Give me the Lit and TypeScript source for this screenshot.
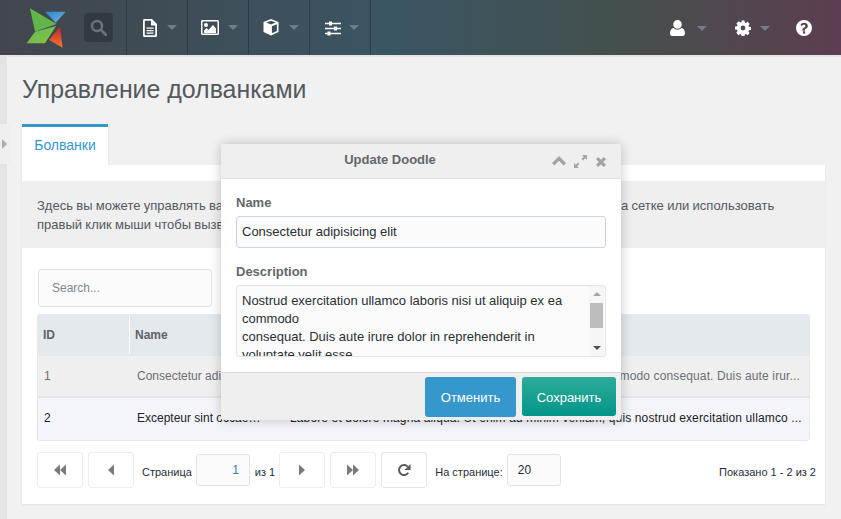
import { LitElement, html, css, svg } from 'lit'
import { customElement } from 'lit/decorators.js'

const icons = {
  file: svg`<path fill-rule="evenodd" d="M1 1.500C1 .7 1.700 0 2.500 0H10l5 5v11.500c0 .8-.7 1.500-1.500 1.500h-11C1.700 18 1 17.300 1 16.500zM2.800 1.800v14.400h10.400V6.500H9V1.800zM4.500 8.500h7v1.300h-7zM4.500 11h7v1.300h-7zM4.500 13.500h7v1.300h-7z"/>`,
  image: svg`<path fill-rule="evenodd" d="M0 1.500C0 .7.700 0 1.500 0h15c.8 0 1.500.7 1.500 1.500v12c0 .8-.7 1.500-1.500 1.500h-15C.7 15 0 14.300 0 13.500zM1.500 1.500v12h15v-12zM3 13l0-2.500 2.500-2.500 2 2 4.500-5 3 3.500V13zM5 3a2 2 0 1 1 0 4 2 2 0 0 1 0-4z"/>`,
  cube: svg`<path fill-rule="evenodd" d="M8 0l7.500 3v10L8 16.500.5 13V3zM3.300 3.600L8 5.400l4.700-1.800L8 1.800zM8.900 14.300l5-2.300V5.200l-5 2z"/>`,
  sliders: svg`<path d="M0 2.700h4V1.500h3v1.200h9v1.600H7v1.200H4V4.300H0zM0 7.700h9V6.500h3v1.200h4v1.600h-4v1.200H9V9.300H0zM0 12.700h2.500v-1.200h3v1.200H16v1.600H5.500v1.200h-3v-1.200H0z"/>`,
  user: svg`<path d="M7.500 0a4.200 4.200 0 0 1 4.200 4.400A4.200 4.200 0 0 1 7.500 8.800a4.200 4.200 0 0 1-4.200-4.400A4.200 4.200 0 0 1 7.500 0zM3.700 8c1 1 2.300 1.700 3.800 1.700S10.300 9 11.300 8c2.500.3 3.700 2.500 3.700 5.500 0 1.500-1 2.500-2.400 2.500H2.400C1 16 0 15 0 13.500 0 10.500 1.200 8.300 3.700 8z"/>`,
  cog: svg`<path fill-rule="evenodd" d="M6.300 0h3.400l.4 2.400 1.300.6 2-1.400 2.400 2.400-1.400 2 .6 1.300 2.400.4v3.400l-2.400.4-.6 1.300 1.400 2-2.400 2.400-2-1.400-1.300.6-.4 2.400H6.300l-.4-2.400-1.300-.6-2 1.400L.2 14.200l1.400-2-.6-1.300L-1.400 10.500V7.100l2.400-.4.600-1.300-1.400-2L3 1 5 2.400l1.300-.6zM8 6a2.800 2.800 0 1 0 0 5.600A2.800 2.800 0 0 0 8 6z"/>`,
  help: svg`<path fill-rule="evenodd" d="M8 0a8 8 0 1 1 0 16A8 8 0 0 1 8 0zM6.900 11.200v2.200h2.300v-2.200zM8.200 2.700c-1.800 0-3 .8-3.800 2l1.500 1.200c.5-.6 1-1.100 2-1.100.9 0 1.500.5 1.500 1.200 0 .8-.6 1.100-1.300 1.500-.9.500-1.700 1.100-1.700 2.300v.9h2.300v-.6c0-.6.400-.9 1.100-1.300 1-.6 2-1.300 2-2.900 0-2-1.800-3.200-3.600-3.200z"/>`,
}

const rows = [
  { id: '1', name: 'Consectetur adipisicing elit', description: 'Nostrud exercitation ullamco laboris nisi ut aliquip ex ea commodo consequat. Duis aute irur...' },
  { id: '2', name: 'Excepteur sint occaecat cupidatat', description: 'Labore et dolore magna aliqua. Ut enim ad minim veniam, quis nostrud exercitation ullamco ...' },
]

@customElement('app-root')
export class AppRoot extends LitElement {
  static styles = css`
    :host {
      display: block;
      position: relative;
      width: 841px;
      height: 519px;
      overflow: hidden;
      background: #f1f1f1;
      font-family: 'Liberation Sans', Arial, sans-serif;
      font-size: 13px;
      color: #53595f;
    }

    svg {
      display: block;
    }

    .header {
      display: flex;
      align-items: stretch;
      height: 55px;
      border-bottom: 2px solid #e4e4e4;
      background: linear-gradient(90deg, #42464c 0%, #3a5563 47%, #44504f 72%, #5c3e50 100%);
    }

    .logo {
      width: 84px;
      flex: none;
      padding: 8px 0 0 26px;
      box-sizing: border-box;
    }

    .search-cell {
      width: 42px;
      flex: none;
      padding-top: 13px;
      box-sizing: border-box;
    }

    .search-btn {
      width: 29px;
      height: 29px;
      border-radius: 4px;
      background: #2f3a42;
      display: flex;
      align-items: center;
      justify-content: center;
    }

    .menu {
      width: 61px;
      flex: none;
      display: flex;
      align-items: center;
      justify-content: space-between;
      padding: 0 10px 0 15px;
      box-sizing: border-box;
      border-left: 1px solid #2c3d49;
    }

    .menu.image {
      padding-left: 13px;
    }

    .menu.cube {
      padding-left: 14px;
    }

    .menu.last {
      width: 62px;
      border-right: 1px solid #2c3d49;
      padding-right: 11px;
    }

    .menu svg {
      fill: #fff;
    }

    .caret {
      width: 0;
      height: 0;
      border-left: 5px solid transparent;
      border-right: 5px solid transparent;
      border-top: 5px solid #6d7f8a;
    }

    .spacer {
      flex: 1;
    }

    .top-right {
      display: flex;
      align-items: center;
      flex: none;
      padding-top: 1px;
    }

    .top-right svg {
      fill: #fff;
    }

    .top-right.user {
      width: 65px;
      gap: 12px;
    }

    .top-right.cog {
      width: 61px;
      gap: 9px;
    }

    .top-right.help {
      width: 45px;
    }

    .page {
      position: relative;
      height: 462px;
      box-sizing: border-box;
      padding: 0 16px 0 22px;
      background: linear-gradient(90deg, #e4e4e4 7px, #f1f1f1 7px);
    }

    .collapser {
      position: absolute;
      left: 0;
      top: 67px;
      width: 11px;
      height: 40px;
      border-radius: 0 3px 3px 0;
      background: #efefef;
      display: flex;
      align-items: center;
      padding-left: 2px;
      box-sizing: border-box;
    }

    .collapser i {
      border-left: 5px solid #a6adb3;
      border-top: 5px solid transparent;
      border-bottom: 5px solid transparent;
    }

    h1 {
      margin: 0;
      padding-top: 17px;
      height: 67px;
      box-sizing: border-box;
      font-size: 24.9px;
      line-height: 30px;
      font-weight: 400;
      color: #53595f;
    }

    .tab {
      width: 86px;
      height: 41px;
      box-sizing: border-box;
      border-top: 3px solid #3697cd;
      background: #fff;
      color: #3697cd;
      font-size: 14px;
      line-height: 37px;
      text-align: center;
      box-shadow: 0 1px 2px rgba(0, 0, 0, 0.08);
    }

    .panel {
      height: 339px;
      background: #fff;
      box-shadow: 0 1px 2px rgba(0, 0, 0, 0.08);
      padding-top: 16px;
      box-sizing: border-box;
    }

    .intro {
      height: 67px;
      padding: 15px 16px 0 15px;
      box-sizing: border-box;
      background: #efefef;
      line-height: 19px;
      word-spacing: -0.27px;
      white-space: nowrap;
      overflow: hidden;
    }

    .grid-wrap {
      padding: 21px 15px 0 15px;
    }

    .search {
      width: 174px;
      height: 38px;
      margin-left: 1px;
      box-sizing: border-box;
      border: 1px solid #e4e4e4;
      border-radius: 3px;
      background: #fbfbfb;
      padding-left: 13px;
      line-height: 36px;
      font-size: 12px;
      color: #80868c;
    }

    .table {
      margin-top: 7px;
      width: 773px;
      border: 1px solid #e4e9ee;
      border-radius: 3px;
      box-sizing: border-box;
    }

    .thead,
    .row {
      display: grid;
      grid-template-columns: 91px 154px minmax(0, 1fr);
      align-items: center;
      box-sizing: border-box;
    }

    .thead {
      height: 40px;
      background: #e4e9ee;
      font-size: 12px;
      font-weight: 700;
      color: #5f6367;
    }

    .thead div {
      height: 38px;
      line-height: 38px;
      padding-left: 5px;
    }

    .thead div + div {
      border-left: 1px solid #fff;
    }

    .row {
      height: 41px;
      font-size: 12px;
      color: #6a6f74;
      background: #efefef;
      border-top: 1px solid #e8e8e8;
    }

    .row.alt {
      height: 44px;
      padding-bottom: 2px;
      background: #f4f5fa;
      color: #1c2128;
      border-top: 2px solid #e4e4e4;
    }

    .row div {
      padding: 0 8px;
      white-space: nowrap;
      overflow: hidden;
      text-overflow: ellipsis;
    }

    .row div:first-child {
      padding-left: 6px;
    }

    .row div:nth-child(2) {
      padding-right: 20px;
    }

    .row div:last-child {
      padding: 0 0 0 7px;
      letter-spacing: 0.13px;
    }

    .pager {
      display: flex;
      align-items: center;
      height: 36px;
      margin-top: 11px;
      width: 779px;
      font-size: 11px;
      color: #1f2d3d;
    }

    .pbtn {
      width: 46px;
      height: 36px;
      box-sizing: border-box;
      border: 1px solid #eee;
      border-radius: 3px;
      margin-right: 5px;
      display: flex;
      align-items: center;
      justify-content: center;
      background: #fff;
    }

    .pbtn svg {
      fill: #7a7a7a;
    }

    .pbtn.next {
      margin-left: 4px;
    }

    .pbtn.refresh {
      border-color: #e4e4e4;
      margin-right: 8px;
    }

    .pinput {
      height: 32px;
      box-sizing: border-box;
      border: 1px solid #e4e4e4;
      border-radius: 3px;
      background: #fbfbfb;
      font-size: 12px;
      line-height: 30px;
    }

    .pinput.num {
      width: 54px;
      margin: 0 5px 0 4px;
      padding-right: 10px;
      text-align: right;
      color: #3b79b0;
    }

    .pinput.size {
      width: 54px;
      margin: 0 0 0 4px;
      padding-left: 10px;
      color: #1f2d3d;
    }

    .label {
      margin-top: 3px;
    }

    .label.first {
      margin-left: 3px;
    }

    .shown {
      margin-left: auto;
      margin-top: 3px;
    }

    .modal {
      position: absolute;
      left: 221px;
      top: 144px;
      width: 400px;
      height: 276px;
      border-radius: 3px;
      background: #fff;
      box-shadow: 0 0 12px rgba(0, 0, 0, 0.22);
      display: flex;
      flex-direction: column;
    }

    .modal-head {
      position: relative;
      height: 35px;
      flex: none;
      box-sizing: border-box;
      border-bottom: 1px solid #dfe3e6;
      border-radius: 3px 3px 0 0;
      background: #efefef;
      text-align: center;
      font-size: 13px;
      font-weight: 700;
      line-height: 31px;
      color: #63676b;
      padding-right: 62px;
    }

    .tools {
      position: absolute;
      right: 15px;
      top: 11px;
      display: flex;
      gap: 8px;
    }

    .tools svg {
      fill: #a3a3a3;
    }

    .tools .up {
      margin-top: 1px;
    }

    .tools .close {
      margin: 2px 0 0 1px;
    }

    .modal-body {
      flex: 1;
      padding: 16px 15px 0;
      box-sizing: border-box;
    }

    label {
      display: block;
      font-size: 13px;
      font-weight: 700;
      line-height: 15px;
      color: #63676b;
    }

    .field {
      margin-top: 6px;
      height: 32px;
      box-sizing: border-box;
      border: 1px solid #c9d5e0;
      border-radius: 3px;
      background: #fbfbfb;
      padding-left: 5px;
      line-height: 29px;
      font-size: 13px;
      color: #2a2f34;
    }

    .second {
      margin-top: 16px;
    }

    .area {
      position: relative;
      margin-top: 6px;
      height: 72px;
      box-sizing: border-box;
      border: 1px solid #e4e4e4;
      border-radius: 3px;
      background: #fbfbfb;
      padding: 6px 22px 0 5px;
      line-height: 18px;
      font-size: 13px;
      color: #2a2f34;
      overflow: hidden;
    }

    .scroll {
      position: absolute;
      right: 1px;
      top: 0;
      bottom: 0;
      width: 15px;
      background: #f6f6f6;
    }

    .scroll b {
      position: absolute;
      left: 1px;
      top: 17px;
      width: 13px;
      height: 25px;
      background: #bdbdbd;
    }

    .scroll i {
      position: absolute;
      left: 4px;
      width: 0;
      height: 0;
      border-left: 4px solid transparent;
      border-right: 4px solid transparent;
    }

    .scroll .up {
      top: 6px;
      border-bottom: 4px solid #a3a3a3;
    }

    .scroll .down {
      bottom: 6px;
      border-top: 4px solid #505050;
    }

    .modal-foot {
      height: 48px;
      flex: none;
      box-sizing: border-box;
      border-top: 1px solid #dcdcdc;
      border-radius: 0 0 3px 3px;
      background: #efefef;
      display: flex;
      justify-content: flex-end;
      align-items: center;
      gap: 6px;
      padding-right: 5px;
    }

    .btn {
      border-radius: 3px;
      color: #fff;
      text-align: center;
      font-size: 13px;
    }

    .btn.cancel {
      width: 91px;
      height: 40px;
      line-height: 42px;
      background: #3697cd;
    }

    .btn.save {
      width: 94px;
      height: 39px;
      line-height: 41px;
      background: linear-gradient(180deg, #2dab99 0%, #04958a 100%);
    }
  `

  private pagerIcon(d: string) {
    return html`<svg width="14" height="14" viewBox="0 0 14 14"><path d=${d}></path></svg>`
  }

  render() {
    return html`
      <div class="header">
        <div class="logo">
          <svg width="40" height="40" viewBox="0 0 40 40">
            <defs>
              <linearGradient id="lg" x1="0" y1="0" x2="1" y2="1">
                <stop offset="0" stop-color="#5cb85c"></stop>
                <stop offset="1" stop-color="#8cc63f"></stop>
              </linearGradient>
              <linearGradient id="lr" x1="0" y1="0" x2="0" y2="1">
                <stop offset="0" stop-color="#c8202a"></stop>
                <stop offset="1" stop-color="#f47a32"></stop>
              </linearGradient>
              <linearGradient id="lb" x1="0" y1="0" x2="1" y2="1">
                <stop offset="0" stop-color="#2f83c6"></stop>
                <stop offset="1" stop-color="#6bb8e6"></stop>
              </linearGradient>
            </defs>
            <polygon points="4,0.300 30.700,16 9,23.700" fill="#62b548"></polygon>
            <polygon points="30,18 19,35.300 0.700,35.300 9,23.700" fill="url(#lg)"></polygon>
            <polygon points="19,3.700 39.700,3.700 29.700,14.700" fill="url(#lb)"></polygon>
            <polygon points="34,18.700 36.700,39.700 23,32" fill="url(#lr)"></polygon>
          </svg>
        </div>
        <div class="search-cell">
          <div class="search-btn">
            <svg width="17" height="17" viewBox="0 0 17 17" fill="none" stroke="#6b7378">
              <circle cx="7" cy="7" r="5" stroke-width="2.400"></circle>
              <path d="M10.800 10.800l5 5" stroke-width="2.800" stroke-linecap="round"></path>
            </svg>
          </div>
        </div>
        <div class="menu"><svg width="16" height="18" viewBox="0 0 16 18">${icons.file}</svg><span class="caret"></span></div>
        <div class="menu image"><svg width="18" height="15" viewBox="0 0 18 15">${icons.image}</svg><span class="caret"></span></div>
        <div class="menu cube"><svg width="16" height="17" viewBox="0 0 16 17">${icons.cube}</svg><span class="caret"></span></div>
        <div class="menu last"><svg width="16" height="16" viewBox="0 0 16 16">${icons.sliders}</svg><span class="caret"></span></div>
        <div class="spacer"></div>
        <div class="top-right user"><svg width="15" height="16" viewBox="0 0 15 16">${icons.user}</svg><span class="caret"></span></div>
        <div class="top-right cog"><svg width="16" height="16" viewBox="-1.400 0 18.800 17.600">${icons.cog}</svg><span class="caret"></span></div>
        <div class="top-right help"><svg width="16" height="16" viewBox="0 0 16 16">${icons.help}</svg></div>
      </div>

      <div class="page">
        <div class="collapser"><i></i></div>
        <h1>Управление долванками</h1>
        <div class="tab">Болванки</div>
        <div class="panel">
          <div class="intro">
            Здесь вы можете управлять вашими долванками. Можете дважды кликнуть на записи таблицы на сетке или использовать<br />
            правый клик мыши чтобы вызвать контекстное меню.
          </div>
          <div class="grid-wrap">
            <div class="search">Search...</div>
            <div class="table">
              <div class="thead"><div>ID</div><div>Name</div><div>Description</div></div>
              ${rows.map(
                (r, i) => html`
                  <div class="row ${i === 1 ? 'alt' : ''}">
                    <div>${r.id}</div>
                    <div>${r.name}</div>
                    <div>${r.description}</div>
                  </div>
                `,
              )}
            </div>
            <div class="pager">
              <div class="pbtn">${this.pagerIcon('M7 1.500v11L1 7zM13 1.500v11L7 7z')}</div>
              <div class="pbtn">${this.pagerIcon('M10 1.500v11L4 7z')}</div>
              <span class="label first">Страница</span>
              <div class="pinput num">1</div>
              <span class="label">из 1</span>
              <div class="pbtn next">${this.pagerIcon('M4 1.500v11L10 7z')}</div>
              <div class="pbtn">${this.pagerIcon('M1 1.500v11L7 7zM7 1.500v11L13 7z')}</div>
              <div class="pbtn refresh">
                <svg width="14" height="14" viewBox="0 0 14 14">
                  <path d="M11.200 9.800A5 5 0 1 1 10.700 3.600" fill="none" stroke="#53595f" stroke-width="2"></path>
                  <path d="M13.500 1v6H7.500z" fill="#53595f"></path>
                </svg>
              </div>
              <span class="label">На странице:</span>
              <div class="pinput size">20</div>
              <span class="shown">Показано 1 - 2 из 2</span>
            </div>
          </div>
        </div>
      </div>

      <div class="modal">
        <div class="modal-head">
          Update Doodle
          <div class="tools">
            <svg class="up" width="14" height="10" viewBox="0 0 14 10"><path d="M7 0l7 7-2.400 2.400L7 4.800 2.400 9.400 0 7z"></path></svg>
            <svg width="13" height="13" viewBox="0 0 13 13"><path d="M8 0h5v5l-1.800-1.800-2.200 2.200-1.400-1.400 2.200-2.200zM5 13H0V8l1.800 1.800L4 7.600 5.400 9 3.200 11.200z"></path></svg>
            <svg class="close" width="10" height="10" viewBox="0 0 10 10"><path d="M2.200 0L5 2.800 7.800 0 10 2.200 7.200 5 10 7.800 7.800 10 5 7.200 2.200 10 0 7.800 2.800 5 0 2.200z"></path></svg>
          </div>
        </div>
        <div class="modal-body">
          <label>Name</label>
          <div class="field">Consectetur adipisicing elit</div>
          <label class="second">Description</label>
          <div class="area">
            Nostrud exercitation ullamco laboris nisi ut aliquip ex ea commodo<br />
            consequat. Duis aute irure dolor in reprehenderit in<br />
            voluptate velit esse
            <div class="scroll"><i class="up"></i><b></b><i class="down"></i></div>
          </div>
        </div>
        <div class="modal-foot">
          <div class="btn cancel">Отменить</div>
          <div class="btn save">Сохранить</div>
        </div>
      </div>
    `
  }
}

declare global {
  interface HTMLElementTagNameMap {
    'app-root': AppRoot
  }
}
